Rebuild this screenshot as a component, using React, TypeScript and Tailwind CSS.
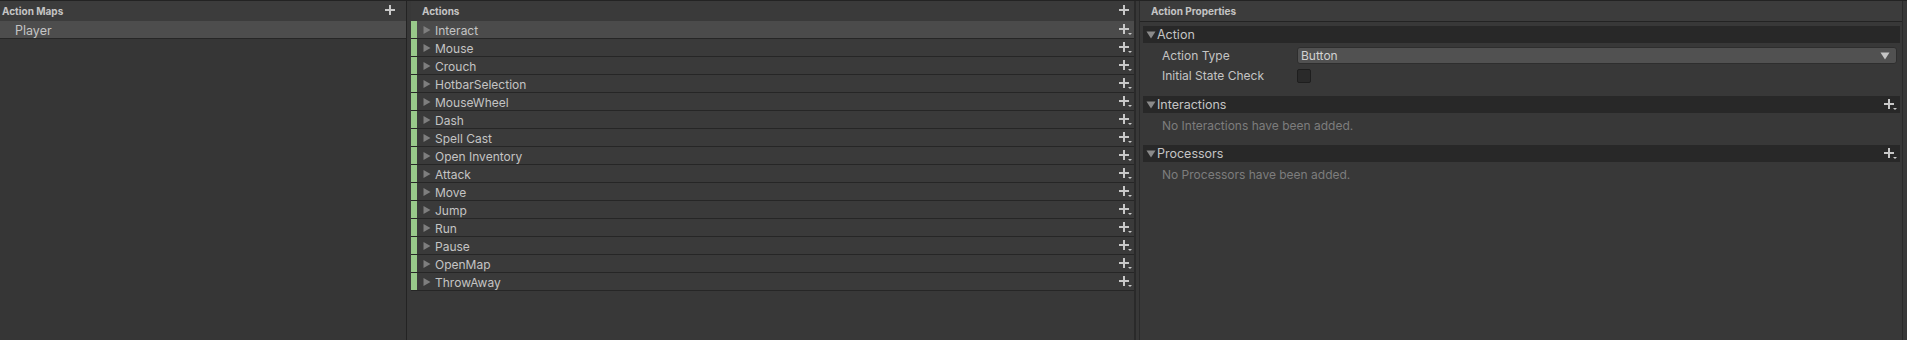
import React from "react";

const acoes = [
  "Interact",
  "Mouse",
  "Crouch",
  "HotbarSelection",
  "MouseWheel",
  "Dash",
  "Spell Cast",
  "Open Inventory",
  "Attack",
  "Move",
  "Jump",
  "Run",
  "Pause",
  "OpenMap",
  "ThrowAway",
];

function IconeMais({ menu = false }: { menu?: boolean }) {
  return (
    <svg width="14" height="12" viewBox="0 0 14 12" className="shrink-0">
      <rect x="4" y="0" width="2" height="10" fill="#c8c8c8" />
      <rect x="0" y="4" width="10" height="2" fill="#c8c8c8" />
      {menu && <path d="M9 9 L13 9 L11 11 Z" fill="#c8c8c8" />}
    </svg>
  );
}

function SetaLateral() {
  return (
    <svg width="8" height="10" viewBox="0 0 8 10" className="shrink-0">
      <path d="M0.5 1 L7.5 5 L0.5 9 Z" fill="#7e7e7e" />
    </svg>
  );
}

function SetaBaixo({ cor = "#8a8a8a" }: { cor?: string }) {
  return (
    <svg width="10" height="8" viewBox="0 0 10 8" className="shrink-0">
      <path d="M0.5 0.5 L9.5 0.5 L5 7.5 Z" fill={cor} />
    </svg>
  );
}

function Secao({ titulo, mais = false }: { titulo: string; mais?: boolean }) {
  return (
    <div className="flex h-[17px] items-center bg-[#282828] pl-[3px] pr-[2px]">
      <SetaBaixo />
      <span className="ml-[1px] pt-[1px] text-[12.5px]">{titulo}</span>
      <div className="flex-1" />
      {mais && <IconeMais menu />}
    </div>
  );
}

export default function App() {
  return (
    <div className="flex h-[340px] w-[1907px] overflow-hidden border-t border-[#232323] bg-[#383838] font-['Inter',sans-serif] text-[#c4c4c4]">
      {/* Action Maps */}
      <div className="flex w-[407px] shrink-0 flex-col border-r border-[#232323] bg-[#363636]">
        <div className="flex h-[20px] items-center justify-between bg-[#3c3c3c] pl-[2px] pr-[7px]">
          <span className="text-[10px] font-bold">Action Maps</span>
          <IconeMais />
        </div>
        <div className="flex h-[18px] items-center border-b border-[#262626] bg-[#4d4d4d] pl-[15px]">
          <span className="pt-[3px] text-[12.5px]">Player</span>
        </div>
      </div>

      <div className="w-[4px] shrink-0 bg-[#383838]" />

      {/* Actions */}
      <div className="flex w-[725px] shrink-0 flex-col border-r-2 border-[#2a2a2a] bg-[#383838]">
        <div className="flex h-[20px] items-center bg-[#3a3a3a] pl-[11px]">
          <span className="text-[10px] font-bold">Actions</span>
          <div className="flex-1" />
          <div className="pr-[1px]">
            <IconeMais />
          </div>
        </div>
        {acoes.map((acao, i) => (
          <div
            key={acao}
            className={`flex h-[18px] items-center border-b border-[#262626] ${
              i === 0 ? "bg-[#4b4b4b]" : "bg-[#3a3a3a]"
            }`}
          >
            <div className="h-full w-[6px] bg-[#98c98a]" />
            <div className="ml-[6px]">
              <SetaLateral />
            </div>
            <span className="ml-[4px] pt-[2px] text-[12px]">{acao}</span>
            <div className="flex-1" />
            <div className="pr-[1px]">
              <IconeMais menu />
            </div>
          </div>
        ))}
      </div>

      <div className="w-[3px] shrink-0 bg-[#383838]" />

      {/* Action Properties */}
      <div className="flex w-[764px] shrink-0 flex-col border-x border-[#2a2a2a] bg-[#383838]">
        <div className="flex h-[21px] items-center border-b border-[#232323] bg-[#3c3c3c] pl-[11px]">
          <span className="text-[10px] font-bold">Action Properties</span>
        </div>
        <div className="flex flex-col pl-[3px] pr-[2px] pt-[4px]">
          <Secao titulo="Action" />
          <div className="mt-[4px] flex h-[17px] items-center pl-[19px] pr-[3px]">
            <span className="w-[135px] text-[12px]">Action Type</span>
            <div className="flex h-[17px] flex-1 items-center rounded-[3px] border border-[#2e2e2e] bg-[#515151] pl-[3px] pr-[6px]">
              <span className="text-[12px] text-[#d2d2d2]">Button</span>
              <div className="flex-1" />
              <SetaBaixo cor="#c4c4c4" />
            </div>
          </div>
          <div className="mt-[3px] flex h-[17px] items-center pl-[19px]">
            <span className="w-[135px] text-[12px]">Initial State Check</span>
            <div className="h-[14px] w-[14px] rounded-[2px] border border-[#1e1e1e] bg-[#2a2a2a]" />
          </div>
          <div className="h-[12px]" />
          <Secao titulo="Interactions" mais />
          <div className="flex h-[32px] items-center pb-[7px] pl-[19px] text-[12px] text-[#7d7d7d]">
            No Interactions have been added.
          </div>
          <Secao titulo="Processors" mais />
          <div className="flex h-[28px] items-center pb-[3px] pl-[19px] text-[12px] text-[#7d7d7d]">
            No Processors have been added.
          </div>
        </div>
      </div>
    </div>
  );
}
